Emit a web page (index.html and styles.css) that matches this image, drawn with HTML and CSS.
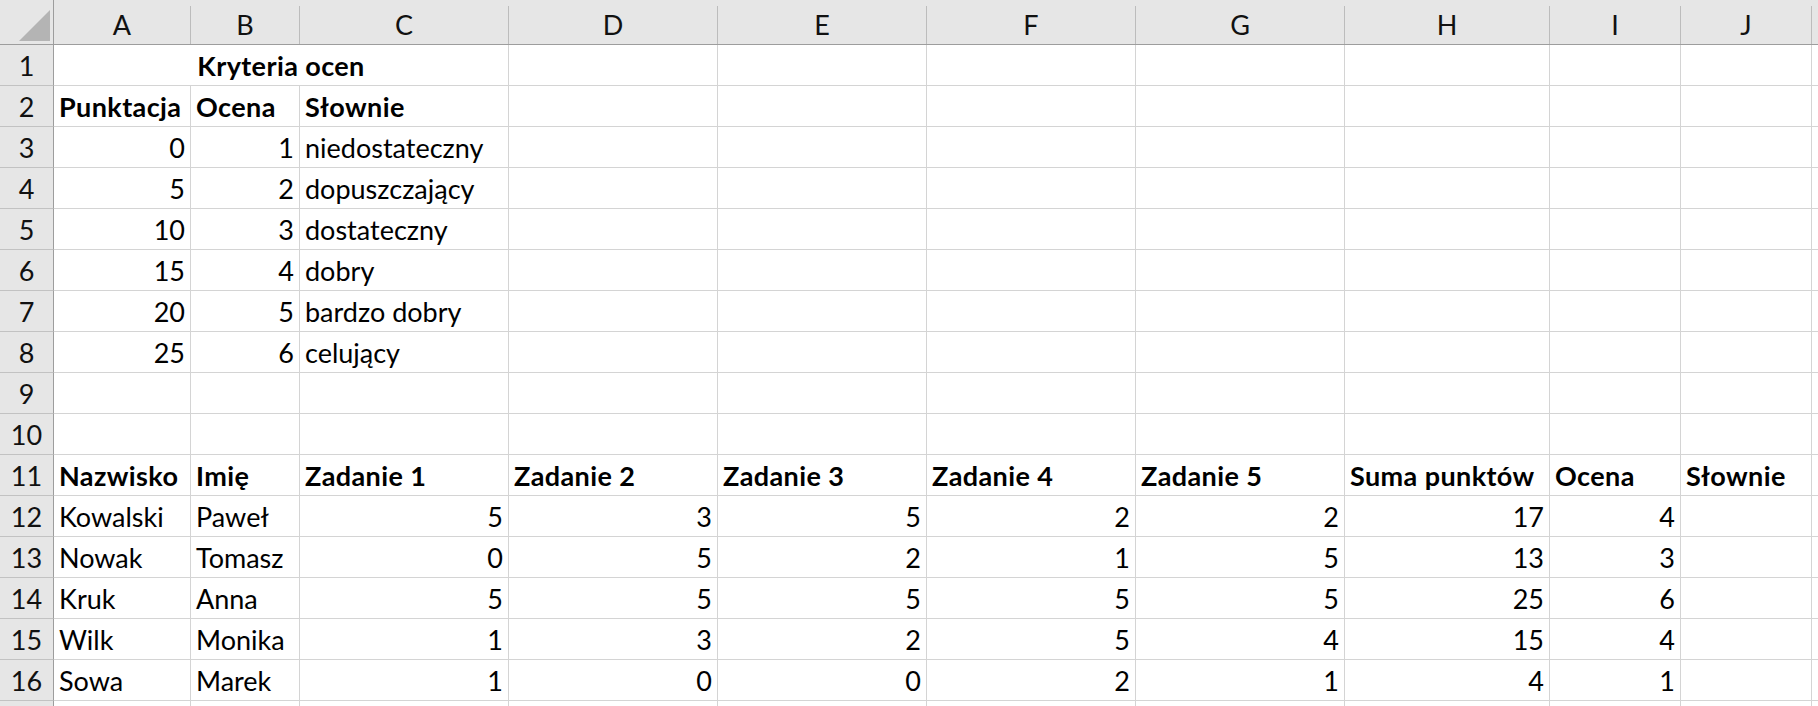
FILE: index.html
```html
<!DOCTYPE html>
<html lang="pl">
<head>
<meta charset="utf-8">
<title>Kryteria ocen</title>
<link rel="stylesheet" href="styles.css">
</head>
<body>
<div class="sheet">
  <div class="corner"><svg class="tri" width="31" height="31" viewBox="0 0 31 31"><polygon points="0,31 31,0 31,31" fill="#b4b4b4"/></svg></div>
  <div class="ch"><span>A</span></div><div class="ch"><span>B</span></div><div class="ch"><span>C</span></div><div class="ch"><span>D</span></div><div class="ch"><span>E</span></div><div class="ch"><span>F</span></div><div class="ch"><span>G</span></div><div class="ch"><span>H</span></div><div class="ch"><span>I</span></div><div class="ch"><span>J</span></div><div class="ch"><span></span></div>

  <div class="rh">1</div><div class="c b ctr span3">Kryteria ocen</div><div class="c"></div><div class="c"></div><div class="c"></div><div class="c"></div><div class="c"></div><div class="c"></div><div class="c"></div><div class="c"></div>
  <div class="rh">2</div><div class="c b">Punktacja</div><div class="c b">Ocena</div><div class="c b">Słownie</div><div class="c"></div><div class="c"></div><div class="c"></div><div class="c"></div><div class="c"></div><div class="c"></div><div class="c"></div><div class="c"></div>
  <div class="rh">3</div><div class="c r">0</div><div class="c r">1</div><div class="c">niedostateczny</div><div class="c"></div><div class="c"></div><div class="c"></div><div class="c"></div><div class="c"></div><div class="c"></div><div class="c"></div><div class="c"></div>
  <div class="rh">4</div><div class="c r">5</div><div class="c r">2</div><div class="c">dopuszczający</div><div class="c"></div><div class="c"></div><div class="c"></div><div class="c"></div><div class="c"></div><div class="c"></div><div class="c"></div><div class="c"></div>
  <div class="rh">5</div><div class="c r">10</div><div class="c r">3</div><div class="c">dostateczny</div><div class="c"></div><div class="c"></div><div class="c"></div><div class="c"></div><div class="c"></div><div class="c"></div><div class="c"></div><div class="c"></div>
  <div class="rh">6</div><div class="c r">15</div><div class="c r">4</div><div class="c">dobry</div><div class="c"></div><div class="c"></div><div class="c"></div><div class="c"></div><div class="c"></div><div class="c"></div><div class="c"></div><div class="c"></div>
  <div class="rh">7</div><div class="c r">20</div><div class="c r">5</div><div class="c">bardzo dobry</div><div class="c"></div><div class="c"></div><div class="c"></div><div class="c"></div><div class="c"></div><div class="c"></div><div class="c"></div><div class="c"></div>
  <div class="rh">8</div><div class="c r">25</div><div class="c r">6</div><div class="c">celujący</div><div class="c"></div><div class="c"></div><div class="c"></div><div class="c"></div><div class="c"></div><div class="c"></div><div class="c"></div><div class="c"></div>
  <div class="rh">9</div><div class="c"></div><div class="c"></div><div class="c"></div><div class="c"></div><div class="c"></div><div class="c"></div><div class="c"></div><div class="c"></div><div class="c"></div><div class="c"></div><div class="c"></div>
  <div class="rh">10</div><div class="c"></div><div class="c"></div><div class="c"></div><div class="c"></div><div class="c"></div><div class="c"></div><div class="c"></div><div class="c"></div><div class="c"></div><div class="c"></div><div class="c"></div>
  <div class="rh">11</div><div class="c b">Nazwisko</div><div class="c b">Imię</div><div class="c b">Zadanie 1</div><div class="c b">Zadanie 2</div><div class="c b">Zadanie 3</div><div class="c b">Zadanie 4</div><div class="c b">Zadanie 5</div><div class="c b">Suma punktów</div><div class="c b">Ocena</div><div class="c b">Słownie</div><div class="c"></div>
  <div class="rh">12</div><div class="c">Kowalski</div><div class="c">Paweł</div><div class="c r">5</div><div class="c r">3</div><div class="c r">5</div><div class="c r">2</div><div class="c r">2</div><div class="c r">17</div><div class="c r">4</div><div class="c"></div><div class="c"></div>
  <div class="rh">13</div><div class="c">Nowak</div><div class="c">Tomasz</div><div class="c r">0</div><div class="c r">5</div><div class="c r">2</div><div class="c r">1</div><div class="c r">5</div><div class="c r">13</div><div class="c r">3</div><div class="c"></div><div class="c"></div>
  <div class="rh">14</div><div class="c">Kruk</div><div class="c">Anna</div><div class="c r">5</div><div class="c r">5</div><div class="c r">5</div><div class="c r">5</div><div class="c r">5</div><div class="c r">25</div><div class="c r">6</div><div class="c"></div><div class="c"></div>
  <div class="rh">15</div><div class="c">Wilk</div><div class="c">Monika</div><div class="c r">1</div><div class="c r">3</div><div class="c r">2</div><div class="c r">5</div><div class="c r">4</div><div class="c r">15</div><div class="c r">4</div><div class="c"></div><div class="c"></div>
  <div class="rh">16</div><div class="c">Sowa</div><div class="c">Marek</div><div class="c r">1</div><div class="c r">0</div><div class="c r">0</div><div class="c r">2</div><div class="c r">1</div><div class="c r">4</div><div class="c r">1</div><div class="c"></div><div class="c"></div>
  <div class="rh rh-last"></div><div class="c"></div><div class="c"></div><div class="c"></div><div class="c"></div><div class="c"></div><div class="c"></div><div class="c"></div><div class="c"></div><div class="c"></div><div class="c"></div><div class="c"></div>
</div>
</body>
</html>
```

FILE: styles.css
```css
html, body {
  margin: 0;
  padding: 0;
  background: #ffffff;
  overflow: hidden;
}

.sheet {
  display: grid;
  grid-template-columns: 54px 137px 109px 209px 209px 209px 209px 209px 205px 131px 131px 1fr;
  grid-template-rows: 45px repeat(16, 41px) 1fr;
  width: 1818px;
  height: 706px;
  overflow: hidden;
  font-family: "Lato", "Noto Sans", sans-serif;
  font-size: 27px;
  line-height: 1;
  color: #000;
}

.corner {
  background: #e6e6e6;
  border-right: 1px solid #9d9d9d;
  border-bottom: 1px solid #9d9d9d;
  box-sizing: border-box;
  display: flex;
  justify-content: flex-end;
  align-items: flex-end;
  padding: 0 3px 3px 0;
}

.tri {
  display: block;
}

.ch {
  background: #e6e6e6;
  border-bottom: 1px solid #9d9d9d;
  box-sizing: border-box;
  padding-top: 6px;
}

.ch span {
  display: flex;
  height: 100%;
  box-sizing: border-box;
  border-right: 1px solid #bcbcbc;
  justify-content: center;
  align-items: flex-end;
  padding-bottom: 6px;
  color: #111;
}

.rh {
  background: #e6e6e6;
  border-right: 1px solid #9d9d9d;
  border-bottom: 1px solid #c2c2c2;
  box-sizing: border-box;
  display: flex;
  justify-content: center;
  align-items: flex-end;
  padding-bottom: 6px;
  color: #111;
}

.rh-last {
  padding-bottom: 0;
}

.c {
  border-right: 1px solid #d4d4d4;
  border-bottom: 1px solid #d4d4d4;
  box-sizing: border-box;
  display: flex;
  align-items: flex-end;
  padding: 0 5px 6px 5px;
  white-space: nowrap;
  overflow: visible;
}

.r {
  justify-content: flex-end;
}

.b {
  font-weight: 700;
  letter-spacing: 0.4px;
}

.ctr {
  justify-content: center;
}

.span3 {
  grid-column: span 3;
}
```
